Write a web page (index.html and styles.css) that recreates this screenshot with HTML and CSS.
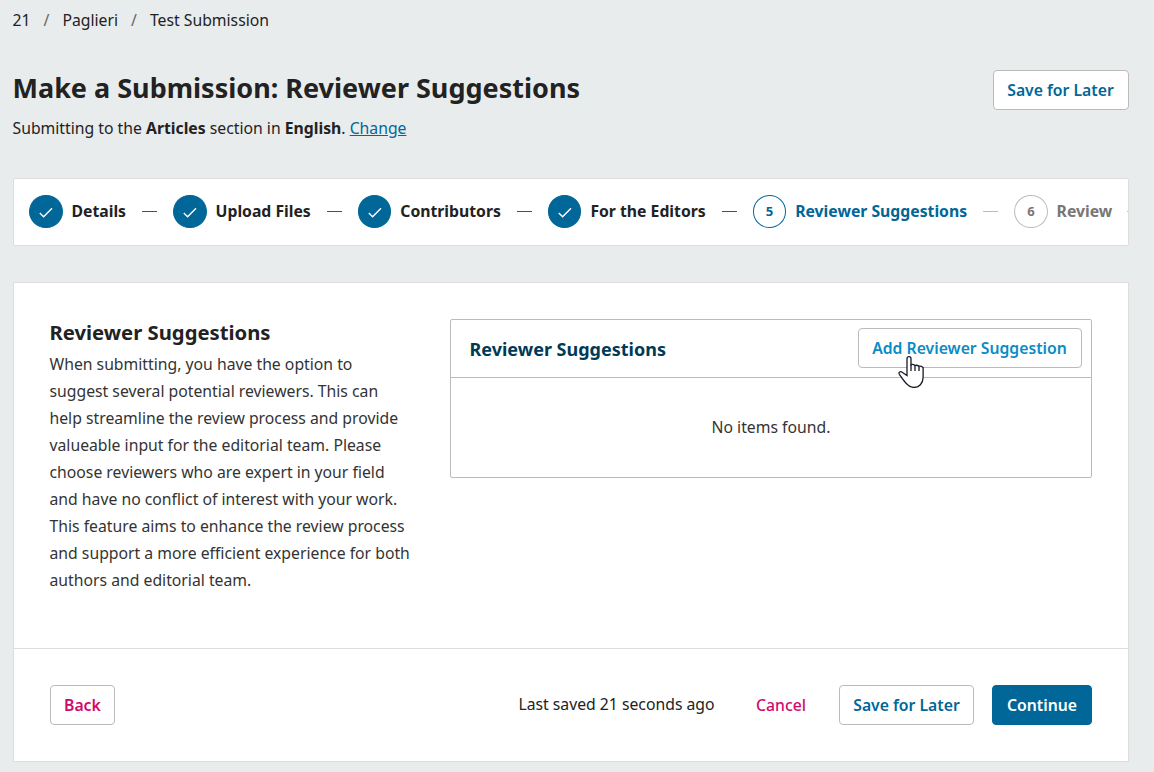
FILE: index.html
```html
<!DOCTYPE html>
<html lang="en">
<head>
<meta charset="utf-8">
<title>Make a Submission</title>
<link rel="stylesheet" href="styles.css">
</head>
<body>
<nav class="crumbs"><span>21</span><span class="sep">/</span><span>Paglieri</span><span class="sep">/</span><span>Test Submission</span></nav>
<header class="head">
  <div>
    <h1>Make a Submission: Reviewer Suggestions</h1>
    <p class="sub">Submitting to the <b>Articles</b> section in <b>English</b>. <a href="#">Change</a></p>
  </div>
  <button class="btn save">Save for Later</button>
</header>
<ol class="steps">
  <li class="step done"><span class="dot"><svg viewBox="0 0 16 16"><path d="M1.800 9 5.600 12.800 14 4.200"/></svg></span><span class="label">Details</span></li>
  <li class="step done"><span class="dot"><svg viewBox="0 0 16 16"><path d="M1.800 9 5.600 12.800 14 4.200"/></svg></span><span class="label">Upload Files</span></li>
  <li class="step done"><span class="dot"><svg viewBox="0 0 16 16"><path d="M1.800 9 5.600 12.800 14 4.200"/></svg></span><span class="label">Contributors</span></li>
  <li class="step done"><span class="dot"><svg viewBox="0 0 16 16"><path d="M1.800 9 5.600 12.800 14 4.200"/></svg></span><span class="label">For the Editors</span></li>
  <li class="step current"><span class="dot"><span class="num">5</span></span><span class="label">Reviewer Suggestions</span></li>
  <li class="step todo"><span class="dot"><span class="num">6</span></span><span class="label">Review</span></li>
</ol>
<main class="panel">
  <section class="body">
    <div class="intro">
      <h2>Reviewer Suggestions</h2>
      <p>When submitting, you have the option to suggest several potential reviewers. This can help streamline the review process and provide valueable input for the editorial team. Please choose reviewers who are expert in your field and have no conflict of interest with your work. This feature aims to enhance the review process and support a more efficient experience for both authors and editorial team.</p>
    </div>
    <div class="list">
      <div class="list-head">
        <h3>Reviewer Suggestions</h3>
        <button class="btn hover">Add Reviewer Suggestion<svg class="cursor" viewBox="0 0 26 32"><path d="M9 19.500V2.700a2 2 0 0 1 4 0V8.800q1.800-1 4 .7 2.200-.7 4 .7 2-.3 4.100 1.300V21.500C25 27.500 21 31.400 16 31.400c-3.500 0-5.700-1.600-8-4.100-2.600-2.800-4.500-5.700-6.500-8.700C0 16 2.500 14.900 4.500 16.500z"/><path fill="none" d="M13 8.500v6.500M17 9.500v5.500M21 10.200v4.800"/></svg></button>
      </div>
      <div class="empty">No items found.</div>
    </div>
  </section>
  <footer class="foot">
    <button class="btn warn">Back</button>
    <span class="saved">Last saved 21 seconds ago</span>
    <button class="link">Cancel</button>
    <button class="btn save">Save for Later</button>
    <button class="btn primary">Continue</button>
  </footer>
</main>
</body>
</html>
```
FILE: styles.css
```css
* { box-sizing: border-box; }
body { margin: 0; height: 772px; overflow: hidden; padding: 8px 25px 0 13px; background: #e9eced; color: #222; font: 15.75px/24px "Noto Sans", sans-serif; }
h1, h2, h3, p, ol { margin: 0; padding: 0; }
.crumbs { display: flex; height: 24px; margin-left: -0.5px; }
.sep { margin: 0 13px; color: #666; }
.head { display: flex; justify-content: space-between; align-items: flex-start; height: 146px; margin-left: -0.5px; padding-top: 38px; }
h1 { font-size: 27px; line-height: 36px; }
.sub { margin-top: 10px; }
a { color: #006798; }
.btn { position: relative; height: 40px; padding: 0 13px; border: 1px solid #bbb; border-radius: 4px; background: #fff; color: #006798; font: 600 15.75px/38px "Noto Sans", sans-serif; white-space: nowrap; }
.save { width: 135px; padding: 0; }
.head .save { width: 136px; padding-right: 1px; }
.steps { display: flex; align-items: center; height: 68px; padding: 0 0 1px 15px; border: 1px solid #ddd; border-radius: 2px; background: #fff; list-style: none; overflow: hidden; }
.step { display: flex; flex: none; align-items: center; font-weight: bold; white-space: nowrap; }
.step::after { content: ""; width: 15px; height: 1px; margin: 0 16px; background: #006798; }
.label { padding-bottom: 2px; }
.num { padding-bottom: 2px; }
.dot { display: flex; align-items: center; justify-content: center; width: 33.5px; height: 33px; margin-right: 9px; border: 1px solid #006798; border-radius: 50%; font-size: 13px; }
.done .dot { background: #006798; }
.dot svg { width: 16px; height: 16px; fill: none; stroke: #fff; stroke-width: 1.4; }
.current { color: #006798; }
.current::after, .todo::after { background: #bbb; }
.todo { color: #777; }
.todo::after { margin-left: 15px; }
.todo .dot { border-color: #bbb; }
.panel { height: 480px; margin-top: 36px; border: 1px solid #ddd; background: #fff; }
.body { display: flex; height: 366px; padding: 36px; border-bottom: 1px solid #ddd; }
.intro { width: 364px; margin: 0 36.5px 0 -0.5px; color: #333; }
h2 { color: #222; font-size: 20.25px; line-height: 27px; }
.intro p { margin-top: 5px; line-height: 27px; }
.list { width: 642px; height: 159px; border: 1px solid #bbb; border-radius: 2px; }
.list-head { display: flex; align-items: center; justify-content: space-between; height: 58px; padding: 0 9px 1px 18.5px; border-bottom: 1px solid #bbb; }
h3 { padding-top: 1px; font-size: 18px; color: #003a55; }
.hover { width: 224px; padding: 0 1px 0 0; color: #0a8bc6; }
.cursor { position: absolute; left: 39px; top: 27px; width: 26px; height: 32px; z-index: 1; fill: #fff; stroke: #181828; stroke-width: 1.3; }
.empty { padding-top: 37px; text-align: center; color: #333; }
.foot { display: flex; align-items: center; height: 112px; padding: 0 36px; }
.saved { margin-left: auto; padding-bottom: 2px; }
.link { margin: 0 33px 0 41.5px; padding: 0; border: 0; background: none; color: #d00a6c; font: 500 15.75px/24px "Noto Sans", sans-serif; }
.warn { color: #d00a6c; }
.primary { width: 100px; margin-left: 18px; padding: 0; border-color: #006798; background: #006798; color: #fff; font-weight: 600; }
```
